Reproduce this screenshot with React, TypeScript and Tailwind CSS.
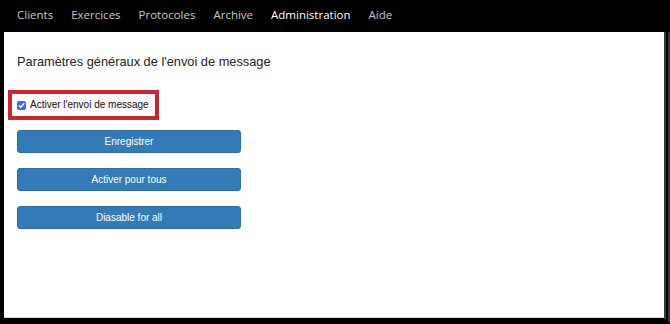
import React from "react";

const navItems = [
  { label: "Clients", active: false },
  { label: "Exercices", active: false },
  { label: "Protocoles", active: false },
  { label: "Archive", active: false },
  { label: "Administration", active: true },
  { label: "Aide", active: false },
];

const buttons = ["Enregistrer", "Activer pour tous", "Diasable for all"];

export default function App() {
  return (
    <div className="w-[670px] h-[324px] bg-black flex flex-col overflow-hidden">
      <nav
        className="h-[32px] flex items-start pt-[7px] pl-[17px] gap-[18px] text-[11.5px] leading-[16px]"
        style={{ fontFamily: '"Open Sans", sans-serif' }}
      >
        {navItems.map((n) => (
          <span key={n.label} className={n.active ? "text-white" : "text-[#c9c9c9]"}>
            {n.label}
          </span>
        ))}
      </nav>
      <div className="flex">
        <div
          className="ml-[4px] w-[660px] h-[286px] bg-white border-b border-[#d4d4d4] pl-[13px]"
          style={{ fontFamily: '"Liberation Sans", Arial, sans-serif' }}
        >
          <h4 className="mt-[22px] text-[12.8px] leading-[15px] text-[#222]">
            Paramètres généraux de l'envoi de message
          </h4>
          <div className="mt-[21px] -ml-[9px] w-[151px] h-[30px] border-[4px] border-[#c62a2e] bg-[#fff8fc] flex items-center pl-[5px] gap-[4px]">
            <span className="w-[9px] h-[9px] rounded-[2px] bg-[#2f6fd8] flex items-center justify-center">
              <svg width="7" height="7" viewBox="0 0 8 8" fill="none">
                <path d="M1.2 4.2 L3.2 6 L6.8 1.8" stroke="white" strokeWidth="1.6" strokeLinecap="round" strokeLinejoin="round" />
              </svg>
            </span>
            <span className="text-[10px] leading-[12px] text-[#111]">Activer l'envoi de message</span>
          </div>
          <div className="mt-[10px] flex flex-col gap-[15px]">
            {buttons.map((b) => (
              <button
                key={b}
                className="w-[224px] h-[23px] rounded-[3px] bg-[#337ab7] border border-[#2e6da4] text-white text-[10px] leading-[12px] flex items-center justify-center"
              >
                {b}
              </button>
            ))}
          </div>
        </div>
        <div className="w-[2px] h-[287px] bg-[#3a3a3a]" />
        <div className="w-[2px] h-[287px] bg-black" />
        <div className="w-[2px] h-[290px] bg-[#3a3a3a]" />
      </div>
    </div>
  );
}
